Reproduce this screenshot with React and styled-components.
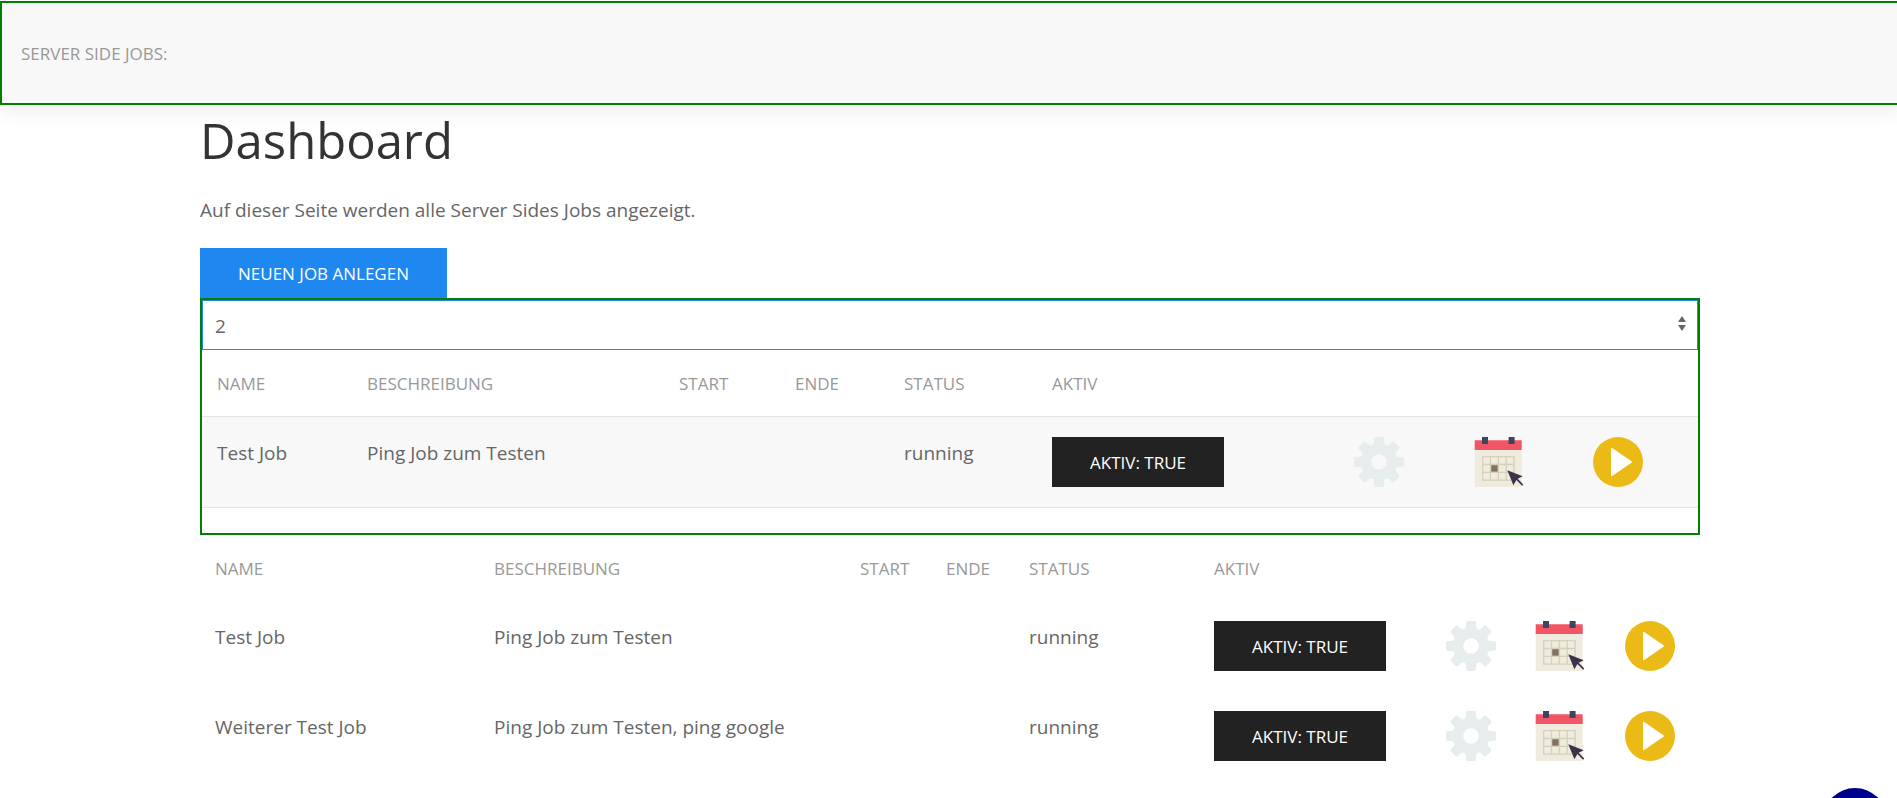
import React, { useState } from "react";
import styled, { createGlobalStyle } from "styled-components";

const GlobalStyle = createGlobalStyle`
  *, *::before, *::after { box-sizing: border-box; }
  body {
    margin: 0;
    background: #fff;
    color: #666;
    font-family: "Open Sans", "Noto Sans", sans-serif;
    font-size: 19px;
    line-height: 32px;
    overflow: hidden;
  }
`;

const Page = styled.div`
  padding-top: 1px;
  margin-right: -3px;
`;

const Navbar = styled.nav`
  display: flex;
  align-items: center;
  height: 104px;
  padding: 2px 19px 0;
  border: 2px solid green;
  background: #f8f8f8;
  box-shadow: 0 6px 19px rgba(0, 0, 0, 0.08);
`;

const NavLink = styled.a`
  color: #999;
  font-size: 17px;
  text-decoration: none;
  text-transform: uppercase;
`;

const Container = styled.main`
  max-width: 1500px;
  margin: 0 auto;
`;

const Title = styled.h1`
  margin: 0 0 23px;
  padding-top: 4px;
  color: #333;
  font-size: 49px;
  font-weight: 400;
  line-height: 62px;
`;

const Intro = styled.p`
  margin: 0 0 22px;
`;

const Button = styled.button`
  display: block;
  min-width: ${(p) => (p.$primary ? 247 : 172)}px;
  height: 50px;
  padding: 1px 30px 0;
  border: 0;
  border-radius: 0;
  background: ${(p) => (p.$primary ? "#1e87f0" : "#222")};
  color: #fff;
  font-family: inherit;
  font-size: 17px;
  line-height: 49px;
  text-transform: uppercase;
  white-space: nowrap;
  cursor: pointer;
`;

const Panel = styled.section`
  padding-bottom: 25px;
  border: 2px solid green;
`;

const SelectWrap = styled.div`
  position: relative;
`;

const Select = styled.select`
  display: block;
  width: 100%;
  height: 50px;
  padding: 1px 30px 0 12px;
  border: 1px solid #1e87f0;
  border-radius: 0;
  outline: none;
  appearance: none;
  background: #fff;
  color: #666;
  font: inherit;
`;

const SelectArrows = styled.svg`
  position: absolute;
  top: 16px;
  right: 12px;
  pointer-events: none;
`;

const Table = styled.table`
  width: 100%;
  border-collapse: separate;
  border-spacing: 0;
  table-layout: fixed;
`;

const HeadCell = styled.th`
  height: 66px;
  padding: 21px 15px 19px;
  color: #999;
  font-size: 17px;
  font-weight: 400;
  line-height: 26px;
  text-align: left;
  text-transform: uppercase;
`;

const Row = styled.tr`
  background: ${(p) => (p.$striped ? "#f8f8f8" : "transparent")};
`;

const Cell = styled.td`
  padding: 20px 0 20px 15px;
  border: 0 solid #e5e5e5;
  border-width: ${(p) => (p.$striped ? "1px 0" : "0")};
  vertical-align: top;
  white-space: nowrap;
`;

const IconButton = styled.button`
  display: block;
  width: 50px;
  height: 50px;
  padding: 0;
  border: 0;
  background: none;
  cursor: pointer;

  svg { display: block; }
`;

const RoundButton = styled.button`
  position: fixed;
  right: 10px;
  bottom: -54px;
  width: 64px;
  height: 64px;
  border: 0;
  border-radius: 50%;
  background: darkblue;
  cursor: pointer;
`;

function GearIcon() {
  return (
    <svg width="50" height="50" viewBox="-25 -25 50 50" fill="#e7eced" aria-hidden="true">
      <circle r="12.5" fill="none" stroke="#e7eced" strokeWidth="9.4" />
      {[0, 45, 90, 135, 180, 225, 270, 315].map((a) => (
        <path
          key={a}
          transform={`rotate(${a})`}
          d="M-5-23Q-5-25-3-25H3Q5-25 5-23V-19.5Q5.2-17.2 7-16.6L4-12H-4L-7-16.6Q-5.2-17.2-5-19.5Z"
        />
      ))}
    </svg>
  );
}

function CalendarIcon() {
  return (
    <svg width="50" height="50" viewBox="0 0 50 50" aria-hidden="true">
      <path fill="#efebde" d="M.7 8h47v42H.7z" />
      <path fill="#f25565" d="M.7 3.3h47V13H.7z" />
      <path fill="#36495f" d="M8 0h6v7H8zM34.6 0h6v7h-6z" />
      <path
        fill="none"
        stroke="#d5d0bb"
        strokeWidth="1.3"
        d="M8.7 19.7h31.4v23.5H8.7zM16.5 19.7v23.5M24.4 19.7v23.5M32.2 19.7v23.5M8.7 27.5h31.4M8.7 35.4h31.4"
      />
      <path fill="#84705f" d="M17.2 28.2h6.5v6.5h-6.5z" />
      <path fill="#3d324c" d="M33.3 33.3l15.4 6-5 2.4 5.6 5.8-1.2 1.2-5.7-5.7-3 5.3z" />
    </svg>
  );
}

function PlayIcon() {
  return (
    <svg width="50" height="50" viewBox="0 0 50 50" aria-hidden="true">
      <circle cx="25" cy="25" r="25" fill="#ebba16" />
      <path fill="#fff" d="M18 11.6q0-1.2 1.2-.5L38.5 24.3q.9.7 0 1.4L19.2 38.9q-1.2.7-1.2-.5z" />
    </svg>
  );
}

const headings = ["Name", "Beschreibung", "Start", "Ende", "Status", "Aktiv"];

function JobTable({ label, columns, jobs, striped }) {
  return (
    <Table aria-label={label}>
      <colgroup>
        {columns.map((width, i) => (
          <col key={i} width={width} />
        ))}
      </colgroup>
      <thead>
        <tr>
          {headings.map((h) => (
            <HeadCell key={h} scope="col">{h}</HeadCell>
          ))}
          <HeadCell as="td" colSpan={3} />
        </tr>
      </thead>
      <tbody>
        {jobs.map((job) => (
          <Row key={job.name} $striped={striped}>
            <Cell $striped={striped}>{job.name}</Cell>
            <Cell $striped={striped}>{job.description}</Cell>
            <Cell $striped={striped} />
            <Cell $striped={striped} />
            <Cell $striped={striped}>running</Cell>
            <Cell $striped={striped}>
              <Button type="button">Aktiv: true</Button>
            </Cell>
            <Cell $striped={striped}>
              <IconButton type="button" aria-label="Einstellungen"><GearIcon /></IconButton>
            </Cell>
            <Cell $striped={striped}>
              <IconButton type="button" aria-label="Zeitplan"><CalendarIcon /></IconButton>
            </Cell>
            <Cell $striped={striped}>
              <IconButton type="button" aria-label="Starten"><PlayIcon /></IconButton>
            </Cell>
          </Row>
        ))}
      </tbody>
    </Table>
  );
}

const testJob = { name: "Test Job", description: "Ping Job zum Testen" };
const secondJob = { name: "Weiterer Test Job", description: "Ping Job zum Testen, ping google" };

export default function App() {
  const [selected, setSelected] = useState("2");
  return (
    <>
      <GlobalStyle />
      <Page>
        <Navbar>
          <NavLink href="#">Server Side Jobs:</NavLink>
        </Navbar>
        <Container>
          <Title>Dashboard</Title>
          <Intro>Auf dieser Seite werden alle Server Sides Jobs angezeigt.</Intro>
          <Button type="button" $primary>Neuen Job anlegen</Button>
          <Panel>
            <SelectWrap>
              <Select aria-label="Job" value={selected} onChange={(e) => setSelected(e.target.value)}>
                <option>1</option>
                <option>2</option>
              </Select>
              <SelectArrows width="8" height="15" viewBox="0 0 8 15" fill="#666" aria-hidden="true">
                <path d="M4 0l4 6H0zM0 9h8l-4 6z" />
              </SelectArrows>
            </SelectWrap>
            <JobTable
              label="Ausgewählter Job"
              columns={[150, 312, 116, 109, 148, 302, 120, 119, 120]}
              jobs={[testJob]}
              striped
            />
          </Panel>
          <JobTable
            label="Alle Jobs"
            columns={[279, 366, 86, 83, 185, 232, 89, 90, 90]}
            jobs={[testJob, secondJob]}
          />
        </Container>
      </Page>
      <RoundButton type="button" aria-label="Mehr" />
    </>
  );
}
